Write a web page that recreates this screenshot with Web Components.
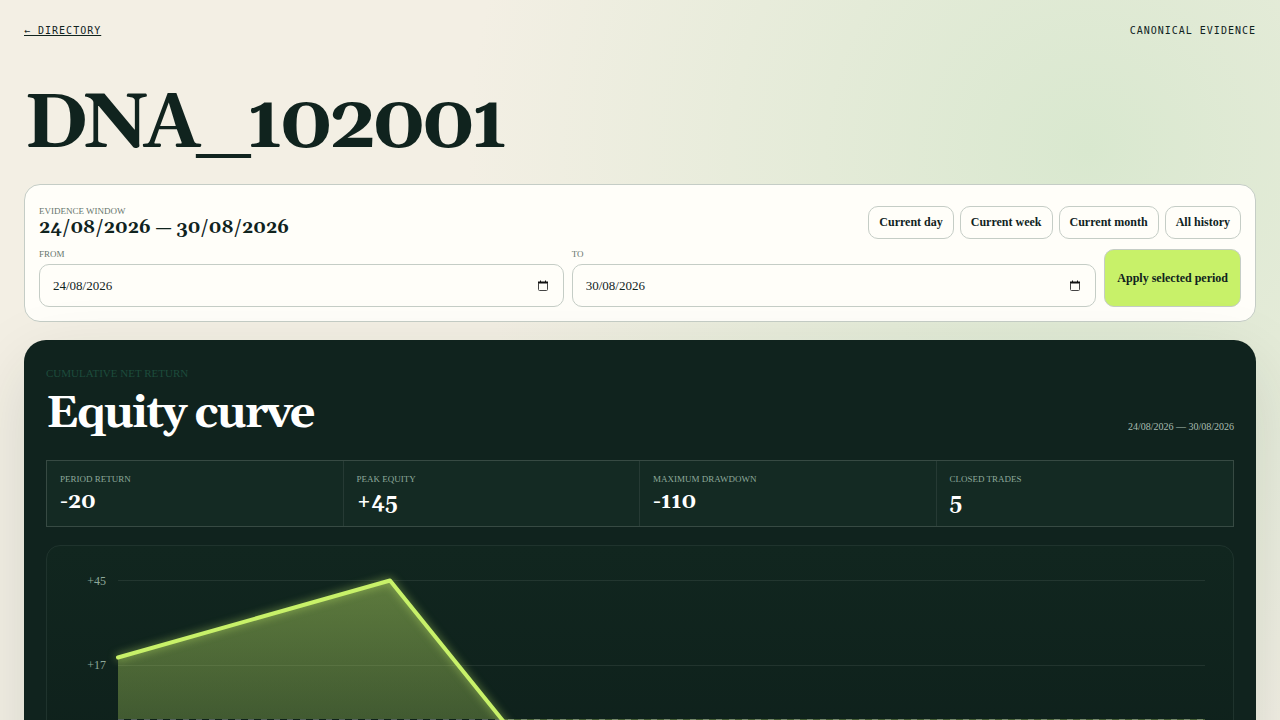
<!DOCTYPE html>
<html lang="en-GB">
<head>
<meta charset="utf-8">
<meta name="viewport" content="width=device-width, initial-scale=1">
<title>DNA_102001</title>
<style>
  :root {
    --ink: #10231e;
    --paper: #f3efe4;
    --card: #fffef9;
    --line: #c5cdc6;
    --lime: #c8f169;
    --muted: #66756c;
    --sage: #8ea99b;
    --display: Georgia, Gelasio, "Liberation Serif", serif;
    --mono: "DejaVu Sans Mono", monospace;
  }
  body {
    margin: 0;
    color: var(--ink);
    background: radial-gradient(circle at 85% 150px, #d9e8cf, transparent 620px) var(--paper);
    font-family: "Liberation Serif", serif;
    font-size: 16px;
  }
</style>
</head>
<body>
<evidence-page>
  <top-bar slot="top" href="#directory" label="← Directory">Canonical evidence</top-bar>
  <span slot="title">DNA_102001</span>
  <period-picker from="24/08/2026" to="30/08/2026">24/08/2026 — 30/08/2026</period-picker>
  <equity-panel>
    <span slot="kicker">Cumulative net return</span>
    <span slot="title">Equity curve</span>
    <span slot="range">24/08/2026 — 30/08/2026</span>
    <stat-cell slot="stats" label="Period return">-20</stat-cell>
    <stat-cell slot="stats" label="Peak equity">+45</stat-cell>
    <stat-cell slot="stats" label="Maximum drawdown">-110</stat-cell>
    <stat-cell slot="stats" label="Closed trades">5</stat-cell>
    <equity-chart></equity-chart>
  </equity-panel>
</evidence-page>

<script>
class EvidencePage extends HTMLElement {
  connectedCallback() {
    this.attachShadow({ mode: 'open' });
    this.shadowRoot.innerHTML = `
      <style>
        :host { display: block; padding: 24px; }
        h1 {
          margin: 50px 0 22px;
          font-family: var(--display);
          font-size: 76px;
          line-height: 75px;
          letter-spacing: -4px;
        }
        main { display: grid; gap: 18px; }
      </style>
      <slot name="top"></slot>
      <h1><slot name="title"></slot></h1>
      <main><slot></slot></main>
    `;
  }
}
customElements.define('evidence-page', EvidencePage);

class TopBar extends HTMLElement {
  connectedCallback() {
    this.attachShadow({ mode: 'open' });
    this.shadowRoot.innerHTML = `
      <style>
        :host {
          display: flex;
          justify-content: space-between;
          font-family: var(--mono);
          font-size: 10px;
          line-height: 13px;
          letter-spacing: 1px;
          text-transform: uppercase;
        }
        a { color: inherit; }
      </style>
      <a href="${this.getAttribute('href')}">${this.getAttribute('label')}</a>
      <span><slot></slot></span>
    `;
  }
}
customElements.define('top-bar', TopBar);

class DateField extends HTMLElement {
  connectedCallback() {
    const label = this.getAttribute('label');
    this.attachShadow({ mode: 'open' });
    this.shadowRoot.innerHTML = `
      <style>
        :host { display: grid; gap: 4px; }
        label {
          color: var(--muted);
          font-size: 9px;
          line-height: 11px;
          text-transform: uppercase;
        }
        .box {
          display: flex;
          align-items: center;
          padding: 0 13px;
          border: 1px solid var(--line);
          border-radius: 10px;
          background: var(--card);
        }
        input {
          flex: 1;
          min-width: 0;
          height: 41px;
          padding: 0;
          border: 0;
          outline: 0;
          color: var(--ink);
          background: none;
          font: 13px "Liberation Serif", serif;
        }
        button { padding: 0; border: 0; background: none; line-height: 0; }
      </style>
      <label for="date">${label}</label>
      <div class="box">
        <input id="date" type="text" inputmode="numeric" value="${this.getAttribute('value')}">
        <button type="button" aria-label="Open calendar">
          <svg width="14" height="14" viewBox="0 0 14 14" fill="none">
            <rect x="2.5" y="3.5" width="9" height="8" rx="1" stroke="#444"></rect>
            <path d="M2 3.5H12" stroke="#111" stroke-width="2"></path>
            <path d="M4.5 1.5V3M9.5 1.5V3" stroke="#111"></path>
          </svg>
        </button>
      </div>
    `;
  }
}
customElements.define('date-field', DateField);

class PeriodPicker extends HTMLElement {
  connectedCallback() {
    this.attachShadow({ mode: 'open' });
    this.shadowRoot.innerHTML = `
      <style>
        :host {
          display: grid;
          gap: 10px;
          padding: 14px;
          border: 1px solid var(--line);
          border-radius: 16px;
          background: var(--card);
        }
        .head {
          display: flex;
          align-items: flex-end;
          justify-content: space-between;
          min-height: 40px;
        }
        .current {
          color: var(--muted);
          font-size: 9px;
          line-height: 11px;
          text-transform: uppercase;
        }
        strong {
          display: block;
          color: var(--ink);
          font-family: var(--display);
          font-size: 18px;
          line-height: 22px;
        }
        .presets { display: flex; gap: 6px; }
        button {
          padding: 8px 10px;
          border: 1px solid var(--line);
          border-radius: 10px;
          color: var(--ink);
          background: var(--card);
          font: bold 12px/15px "Liberation Serif", serif;
        }
        form {
          display: grid;
          grid-template-columns: 1fr 1fr auto;
          gap: 8px;
        }
        .apply { padding: 0 12px; background: var(--lime); }
      </style>
      <div class="head">
        <div class="current">Evidence window<strong><slot></slot></strong></div>
        <div class="presets">
          <button type="button">Current day</button>
          <button type="button">Current week</button>
          <button type="button">Current month</button>
          <button type="button">All history</button>
        </div>
      </div>
      <form>
        <date-field label="From" value="${this.getAttribute('from')}"></date-field>
        <date-field label="To" value="${this.getAttribute('to')}"></date-field>
        <button class="apply" type="button">Apply selected period</button>
      </form>
    `;
  }
}
customElements.define('period-picker', PeriodPicker);

class EquityPanel extends HTMLElement {
  connectedCallback() {
    this.attachShadow({ mode: 'open' });
    this.shadowRoot.innerHTML = `
      <style>
        :host {
          display: block;
          padding: 22px;
          border-radius: 22px;
          color: #fff;
          background: var(--ink);
          box-shadow: 0 24px 70px rgba(16, 35, 30, 0.13);
        }
        header {
          display: flex;
          align-items: flex-end;
          justify-content: space-between;
        }
        .kicker {
          color: #1d4c3c;
          font-size: 11px;
          line-height: 22px;
          text-transform: uppercase;
        }
        h2 {
          margin: 5px 0 0;
          font-family: var(--display);
          font-size: 45px;
          line-height: 50px;
          letter-spacing: -2px;
        }
        .range { color: #a9bdb1; font-size: 10px; line-height: 24px; }
        .stats {
          display: grid;
          grid-template-columns: repeat(4, 1fr);
          margin: 21px 0 18px;
          border: 1px solid #374a43;
          background: #142a23;
        }
      </style>
      <header>
        <div>
          <div class="kicker"><slot name="kicker"></slot></div>
          <h2><slot name="title"></slot></h2>
        </div>
        <div class="range"><slot name="range"></slot></div>
      </header>
      <div class="stats"><slot name="stats"></slot></div>
      <slot></slot>
    `;
  }
}
customElements.define('equity-panel', EquityPanel);

class StatCell extends HTMLElement {
  connectedCallback() {
    this.attachShadow({ mode: 'open' });
    this.shadowRoot.innerHTML = `
      <style>
        :host { display: block; padding: 12px 13px; border-right: 1px solid #263a34; }
        :host(:last-of-type) { border-right: 0; }
        .label {
          color: var(--sage);
          font-size: 9px;
          line-height: 12px;
          text-transform: uppercase;
        }
        strong {
          display: block;
          margin-top: 5px;
          font-family: var(--display);
          font-size: 21px;
          line-height: 24px;
        }
      </style>
      <div class="label">${this.getAttribute('label')}</div>
      <strong><slot></slot></strong>
    `;
  }
}
customElements.define('stat-cell', StatCell);

class EquityChart extends HTMLElement {
  connectedCallback() {
    this.attachShadow({ mode: 'open' });
    this.shadowRoot.innerHTML = `
      <style>
        :host {
          display: block;
          padding: 10px;
          border: 1px solid #1f332d;
          border-radius: 14px;
          background: linear-gradient(#11261f, #0e201b 240px);
        }
        svg { display: block; width: 100%; height: auto; overflow: visible; }
        text { fill: var(--sage); font-size: 12px; text-anchor: end; }
        .grid { stroke: #fff; stroke-opacity: 0.08; }
        .zero { stroke: #fff; stroke-opacity: 0.28; stroke-dasharray: 6 7; }
        .line {
          fill: none;
          stroke: var(--lime);
          stroke-width: 4;
          stroke-linecap: round;
          stroke-linejoin: round;
          filter: drop-shadow(0 0 4px rgba(200, 241, 105, 0.6));
        }
      </style>
      <svg viewBox="0 0 1166 520" role="img" aria-label="Equity curve">
        <defs>
          <linearGradient id="area" x1="0" y1="24" x2="0" y2="400" gradientUnits="userSpaceOnUse">
            <stop offset="0" stop-color="#c8f169" stop-opacity="0.42"></stop>
            <stop offset="1" stop-color="#c8f169" stop-opacity="0.02"></stop>
          </linearGradient>
        </defs>
        <path class="grid" d="M61 24.5H1148M61 109.5H1148M61 194.5H1148M61 279.5H1148"></path>
        <text x="49" y="29">+45</text>
        <text x="49" y="113">+17</text>
        <path fill="url(#area)" d="M61 101.5L333 24.5L604 361L877 331L1148 223V163H61Z"></path>
        <path class="zero" d="M61 163.5H1148"></path>
        <path class="line" d="M61 101.5L333 24.5L604 361L877 331L1148 223"></path>
      </svg>
    `;
  }
}
customElements.define('equity-chart', EquityChart);
</script>
</body>
</html>
